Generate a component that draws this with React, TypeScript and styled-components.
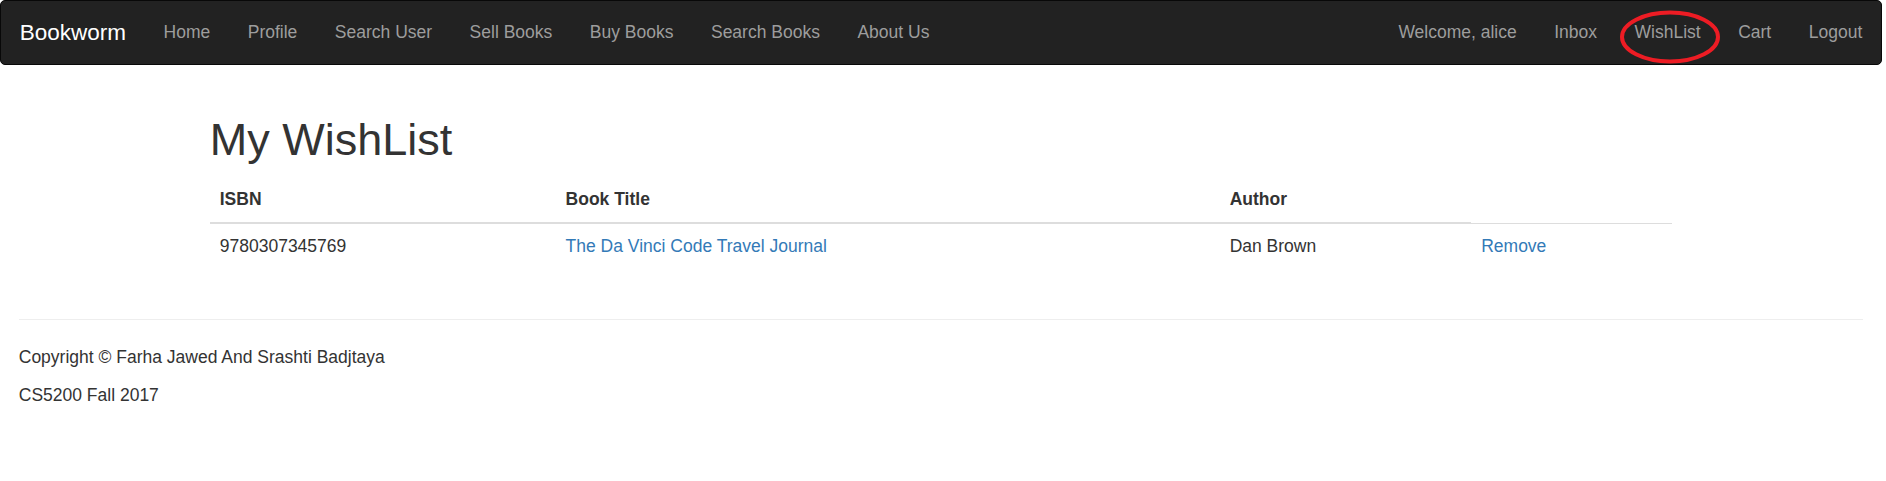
import React from "react";
import styled, { createGlobalStyle } from "styled-components";

const GlobalStyle = createGlobalStyle`
  html, body { margin: 0; padding: 0; background: #fff; }
  body {
    font-family: "Liberation Sans", Arial, Helvetica, sans-serif;
    font-size: 17.5px;
    line-height: 25px;
    color: #333;
  }
  * { box-sizing: border-box; }
`;

const Page = styled.div`
  width: calc(100% - 4px);
`;

const Navbar = styled.nav`
  position: relative;
  display: flex;
  justify-content: space-between;
  align-items: stretch;
  min-height: 65px;
  background: #222;
  border: 1.25px solid #080808;
  border-radius: 5px;
  margin-bottom: 25px;
`;

const NavGroup = styled.ul`
  display: flex;
  list-style: none;
  margin: 0;
  padding: 0;
`;

const Brand = styled.a`
  display: block;
  padding: 18.75px;
  font-size: 22.5px;
  line-height: 25px;
  color: #fff;
  text-decoration: none;
`;

const NavLink = styled.a`
  display: block;
  padding: 18.75px;
  line-height: 25px;
  color: #9d9d9d;
  text-decoration: none;
`;

const Highlight = styled.svg`
  position: absolute;
  left: 1617px;
  top: 7px;
  width: 106px;
  height: 60px;
  pointer-events: none;
  overflow: visible;
`;

const Container = styled.main`
  display: flow-root;
  width: 1462.5px;
  margin: 0 auto;
`;

const Title = styled.h1`
  font-size: 45px;
  line-height: 1.1;
  font-weight: 500;
  margin: 25px 0 12.5px;
  color: #333;
`;

const Table = styled.table`
  width: 100%;
  border-collapse: collapse;
  border-spacing: 0;
  margin-bottom: 25px;
`;

const HeadCell = styled.th`
  text-align: left;
  padding: 10px;
  line-height: 25px;
  font-weight: bold;
  border-bottom: 2.5px solid #ddd;
  vertical-align: bottom;
`;

const Cell = styled.td`
  padding: 10px;
  line-height: 25px;
  border-top: 1.25px solid #ddd;
  vertical-align: top;
`;

const Link = styled.a`
  color: #337ab7;
  text-decoration: none;
`;

const Footer = styled.footer`
  display: flow-root;
  padding: 0 18.75px;
`;

const Rule = styled.hr`
  margin: 25px 0;
  border: 0;
  border-top: 1.25px solid #eee;
`;

const FooterText = styled.p`
  margin: 0 0 12.5px;
`;

const leftLinks = ["Home", "Profile", "Search User", "Sell Books", "Buy Books", "Search Books", "About Us"];
const rightLinks = ["Welcome, alice", "Inbox", "WishList", "Cart", "Logout"];

export default function App() {
  return (
    <Page>
      <GlobalStyle />
      <Navbar>
        <NavGroup>
          <li><Brand href="#">Bookworm</Brand></li>
          {leftLinks.map((l) => (
            <li key={l}><NavLink href="#">{l}</NavLink></li>
          ))}
        </NavGroup>
        <NavGroup>
          {rightLinks.map((l) => (
            <li key={l}><NavLink href="#">{l}</NavLink></li>
          ))}
        </NavGroup>
        <Highlight viewBox="0 0 106 60">
          <ellipse cx="52" cy="29" rx="48" ry="24.5" fill="none" stroke="#ed1c24" strokeWidth="4" />
        </Highlight>
      </Navbar>
      <Container>
        <Title>My WishList</Title>
        <Table>
          <thead>
            <tr>
              <HeadCell>ISBN</HeadCell>
              <HeadCell>Book Title</HeadCell>
              <HeadCell>Author</HeadCell>
            </tr>
          </thead>
          <tbody>
            <tr>
              <Cell>9780307345769</Cell>
              <Cell><Link href="#">The Da Vinci Code Travel Journal</Link></Cell>
              <Cell>Dan Brown</Cell>
              <Cell><Link href="#">Remove</Link></Cell>
            </tr>
          </tbody>
        </Table>
      </Container>
      <Footer>
        <Rule />
        <FooterText>Copyright © Farha Jawed And Srashti Badjtaya</FooterText>
        <FooterText>CS5200 Fall 2017</FooterText>
      </Footer>
    </Page>
  );
}
